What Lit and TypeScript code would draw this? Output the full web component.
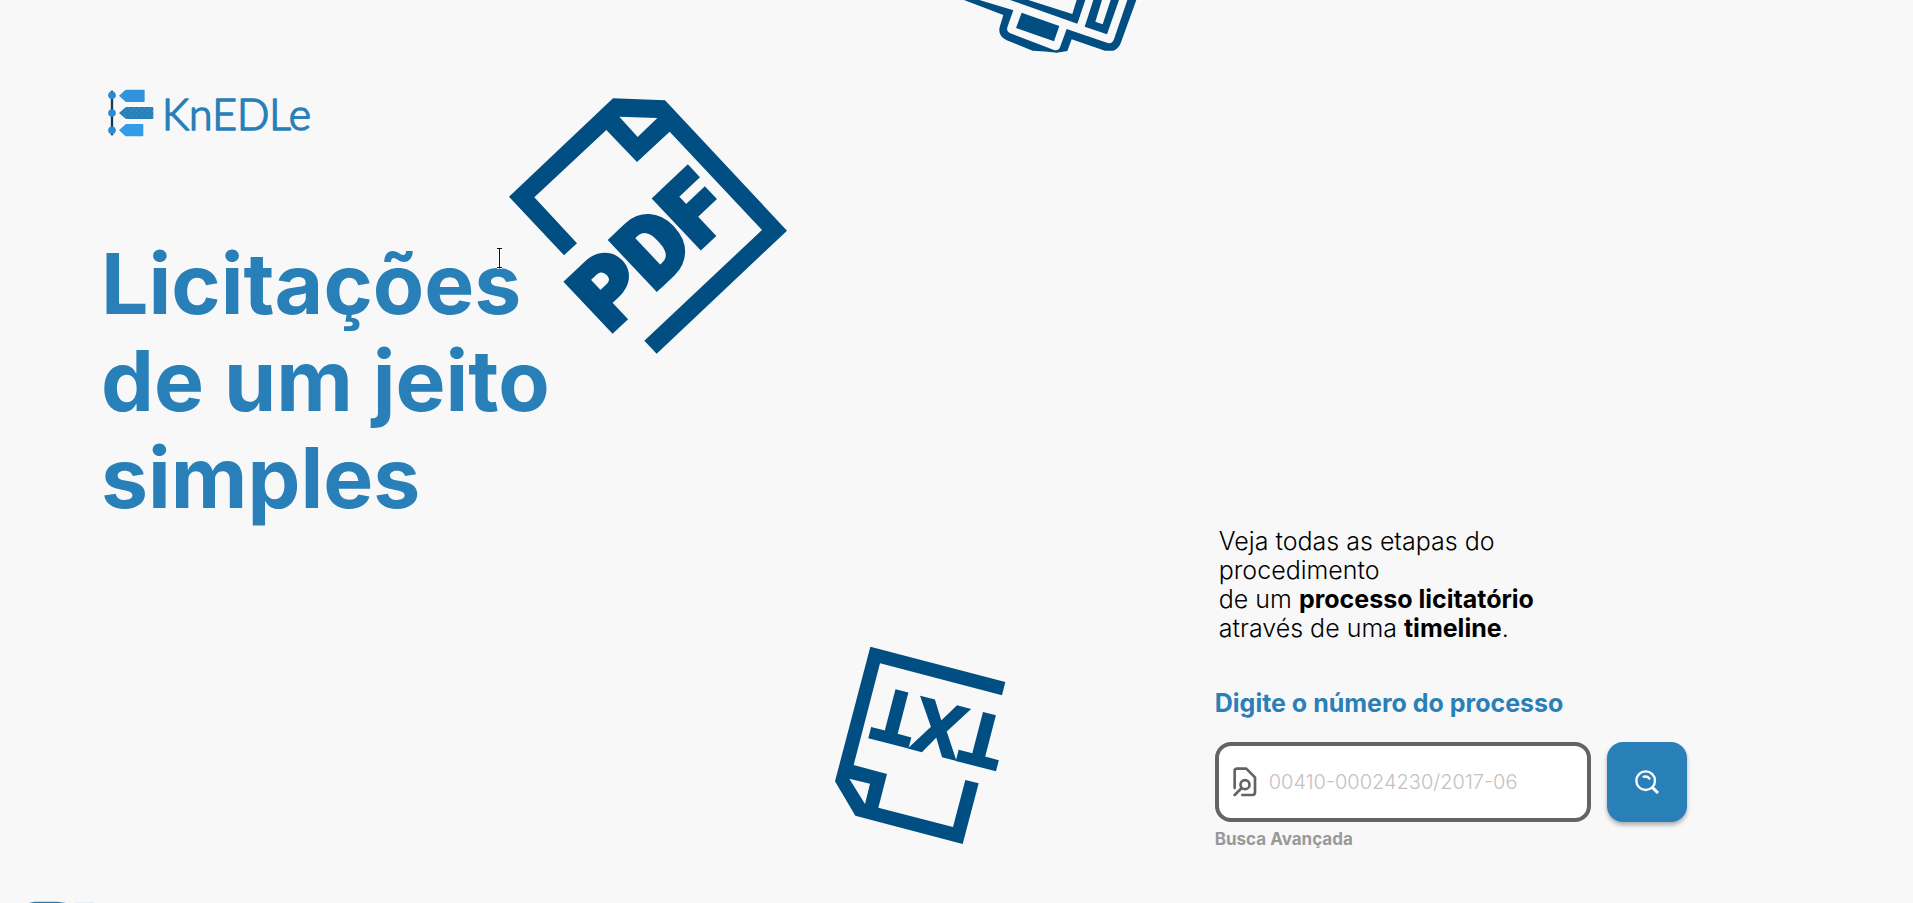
import { LitElement, html, css, svg } from "lit";
import { customElement, state } from "lit/decorators.js";

const nodes = [76, 129, 181];

@customElement("knedle-logo")
class KnedleLogo extends LitElement {
  static styles = css`
    :host { display: block; }
    .logo { display: block; width: 204px; height: 48px; overflow: visible; }
    .word { font: 300 128px Lato, sans-serif; fill: #2980b9; stroke: #2980b9; stroke-width: 5; stroke-linejoin: round; }
  `;
  render() {
    return html`<svg class="logo" viewBox="51 57 612 144" role="img" aria-label="KnEDLe">
      <defs>
        <pattern id="dots" width="16" height="16" patternUnits="userSpaceOnUse">
          <circle cx="4" cy="4" r="1.5" fill="#55a3d8" /><circle cx="12" cy="11" r="1.5" fill="#55a3d8" />
        </pattern>
      </defs>
      <path d="M66 62V196" stroke="#17384f" stroke-width="7" />
      ${nodes.map((y) => svg`<circle cx="66" cy=${y} r="11.5" fill="#2b8bd0" />`)}
      <path d="M87 77 105 61Q107 59 110 59H161Q164 59 164 62V93Q164 96 161 96H110Q107 96 105 94Z" fill="#3093dc" />
      <path d="M87 129 105 113Q107 111 110 111H187Q190 111 190 114V144Q190 147 187 147H110Q107 147 105 145Z" fill="#2980b9" />
      <path d="M87 129 107 111H190V147H107Z" fill="url(#dots)" />
      <path d="M87 181 105 164Q107 162 110 162H157Q160 162 160 165V196Q160 199 157 199H110Q107 199 105 197Z" fill="#339ce8" />
      <text class="word" x="216" y="179">KnEDLe</text>
    </svg>`;
  }
}

@customElement("process-search")
class ProcessSearch extends LitElement {
  static styles = css`
    :host { display: block; }
    .label { display: block; font-size: 25px; font-weight: 700; line-height: 29px; color: #2980b9; margin-bottom: 24px; }
    .row { display: flex; gap: 16px; }
    .field {
      box-sizing: border-box; width: 376px; height: 80px; display: flex; align-items: center; gap: 12px;
      border: 4px solid #666360; border-radius: 16px; background: #fff; padding: 0 14px;
    }
    .doc { flex: none; width: 24px; height: 30px; }
    .input {
      flex: 1; min-width: 0; border: 0; outline: 0; padding: 0; background: none;
      font-family: inherit; font-size: 20px; font-weight: 300; color: #333;
    }
    .input::placeholder { color: #c7c1c1; opacity: 1; }
    .button {
      width: 80px; height: 80px; border: 0; border-radius: 16px; padding: 0; background: #2980b9;
      display: grid; place-items: center; box-shadow: 0 3px 4px rgba(0, 0, 0, 0.3); cursor: pointer;
    }
    .glass { width: 24px; height: 24px; }
    .advanced { display: inline-block; margin-top: 7px; font-size: 17px; line-height: 20px; font-weight: 700; color: #999; text-decoration: none; }
  `;
  @state() value = "";
  render() {
    return html`
      <form @submit=${(e: Event) => e.preventDefault()}>
        <label class="label" for="process">Digite o número do processo</label>
        <div class="row">
          <div class="field">
            <svg class="doc" viewBox="99 141 72 90" fill="none" stroke="#666360" stroke-width="8" stroke-linecap="round" stroke-linejoin="round" aria-hidden="true">
              <path d="M104 204V153Q104 146 111 146H139L165 172V217Q165 225 157 225H127" />
              <circle cx="135" cy="194" r="13.5" />
              <path d="M125 204 104 225" />
            </svg>
            <input class="input" id="process" type="text" placeholder="00410-00024230/2017-06" .value=${this.value}
              @input=${(e: Event) => (this.value = (e.target as HTMLInputElement).value)} />
          </div>
          <button class="button" type="submit" aria-label="Buscar">
            <svg class="glass" viewBox="1302 147 72 72" fill="none" stroke="#fff" stroke-width="7" aria-hidden="true">
              <circle cx="1334" cy="179" r="28" />
              <path d="M1354 199 1371 216" stroke-width="9" />
              <path d="M1325 168Q1339 163 1347 175" />
            </svg>
          </button>
        </div>
        <a class="advanced" href="#avancada">Busca Avançada</a>
      </form>
    `;
  }
}

@customElement("app-root")
class AppRoot extends LitElement {
  static styles = css`
    :host { display: block; font-family: Inter, "Open Sans", sans-serif; background: #f8f8f8; color: #000; }
    .hero { position: relative; box-sizing: border-box; min-height: 100vh; padding-top: 89px; overflow: hidden; }
    .brand { margin-left: 107px; }
    .title { margin: 98px 0 0 101px; font-size: 84px; line-height: 97px; font-weight: 700; color: #2980b9; }
    .panel { margin-left: 63.5%; padding: 1px 0 48px; }
    .intro { margin: 0 0 46px 4px; font-size: 25px; line-height: 29px; font-weight: 300; }
    .intro b { font-weight: 700; }
    .art { position: absolute; pointer-events: none; fill: #004e82; }
    .pdf { left: 490px; top: 80px; width: 320px; height: 290px; }
    .pdf-text { font: 900 280px Roboto, sans-serif; stroke: #004e82; stroke-width: 16; }
    .printer { left: 940px; top: 0; width: 220px; height: 70px; }
    .paper { fill: #f8f8f8; }
    .txt { left: 820px; top: 630px; width: 200px; height: 230px; }
    .txt-text { font: 700 218px "Open Sans", sans-serif; stroke: #004e82; stroke-width: 7; }
    .caret { left: 494px; top: 246px; width: 12px; height: 24px; }
    .peek { left: 28px; bottom: 0; width: 80px; height: 2px; }
  `;
  render() {
    return html`
      <main class="hero">
        <svg class="art printer" viewBox="0 0 660 210" aria-hidden="true">
          <path d="M72 0 190 45 180 78Q171 106 200 121L278 152Q318 154 350 158L382 153 395 118 495 152H520Q535 147 542 130L589 0Z" />
          <path class="paper" d="M118 0 220 31 202 82Q199 95 211 100L342 150Q355 154 360 142L380 87 503 129Q516 133 522 118L562 0Z" />
          <path d="M210 0 412 71 436 0Z" />
          <path class="paper" d="M265 0 397 42 410 0Z" />
          <path d="M460 0 434 80 501 103 537 0Z" />
          <path class="paper" d="M486 0 466 65 488 73 512 0Z" />
          <path d="M245 38 358 78 342 124 228 84Z" />
        </svg>
        <svg class="art pdf" viewBox="0 0 960 870" aria-hidden="true">
          <path fill-rule="evenodd" d="M57 350 369 55 525 61 891 452 500 821 463 782 816 450 539 155 441 246 349 150 133 352 261 490 222 526ZM388 110 443 171 502 114Z" />
          <text class="pdf-text" text-anchor="middle" transform="translate(545 583) rotate(-43.3)">PDF</text>
        </svg>
        <svg class="art txt" viewBox="0 0 600 690" aria-hidden="true">
          <path fill-rule="evenodd" d="M151 50 556 156 546 196 180 100 101 405 201 432 175 533 399 591 436 450 476 460 428 642 106 557 45 454ZM88 446 135 522 150 461Z" />
          <text class="txt-text" text-anchor="middle" transform="translate(376 220) rotate(194.5)">TXT</text>
        </svg>
        <knedle-logo class="brand"></knedle-logo>
        <h1 class="title">Licitações<br />de um jeito<br />simples</h1>
        <section class="panel">
          <p class="intro">
            Veja todas as etapas do<br />procedimento<br />de um <b>processo licitatório</b><br />através de uma <b>timeline</b>.
          </p>
          <process-search></process-search>
        </section>
        <svg class="art caret" viewBox="0 0 12 24" fill="none" aria-hidden="true">
          <path d="M3 2.5H5M6 2.5H8M5.5 3V21M3 21.5H5M6 21.5H8" stroke="#fff" stroke-width="3" />
          <path d="M3 2.5H8M5.5 2V22M3 21.5H8" stroke="#111" stroke-width="1" />
        </svg>
        <svg class="art peek" viewBox="0 0 80 2" aria-hidden="true">
          <path d="M1 2 6 .8H30L38 2Z" fill="#2980b9" />
          <path d="M47 1H66V2H47Z" fill="#e4eef5" />
        </svg>
      </main>
    `;
  }
}
